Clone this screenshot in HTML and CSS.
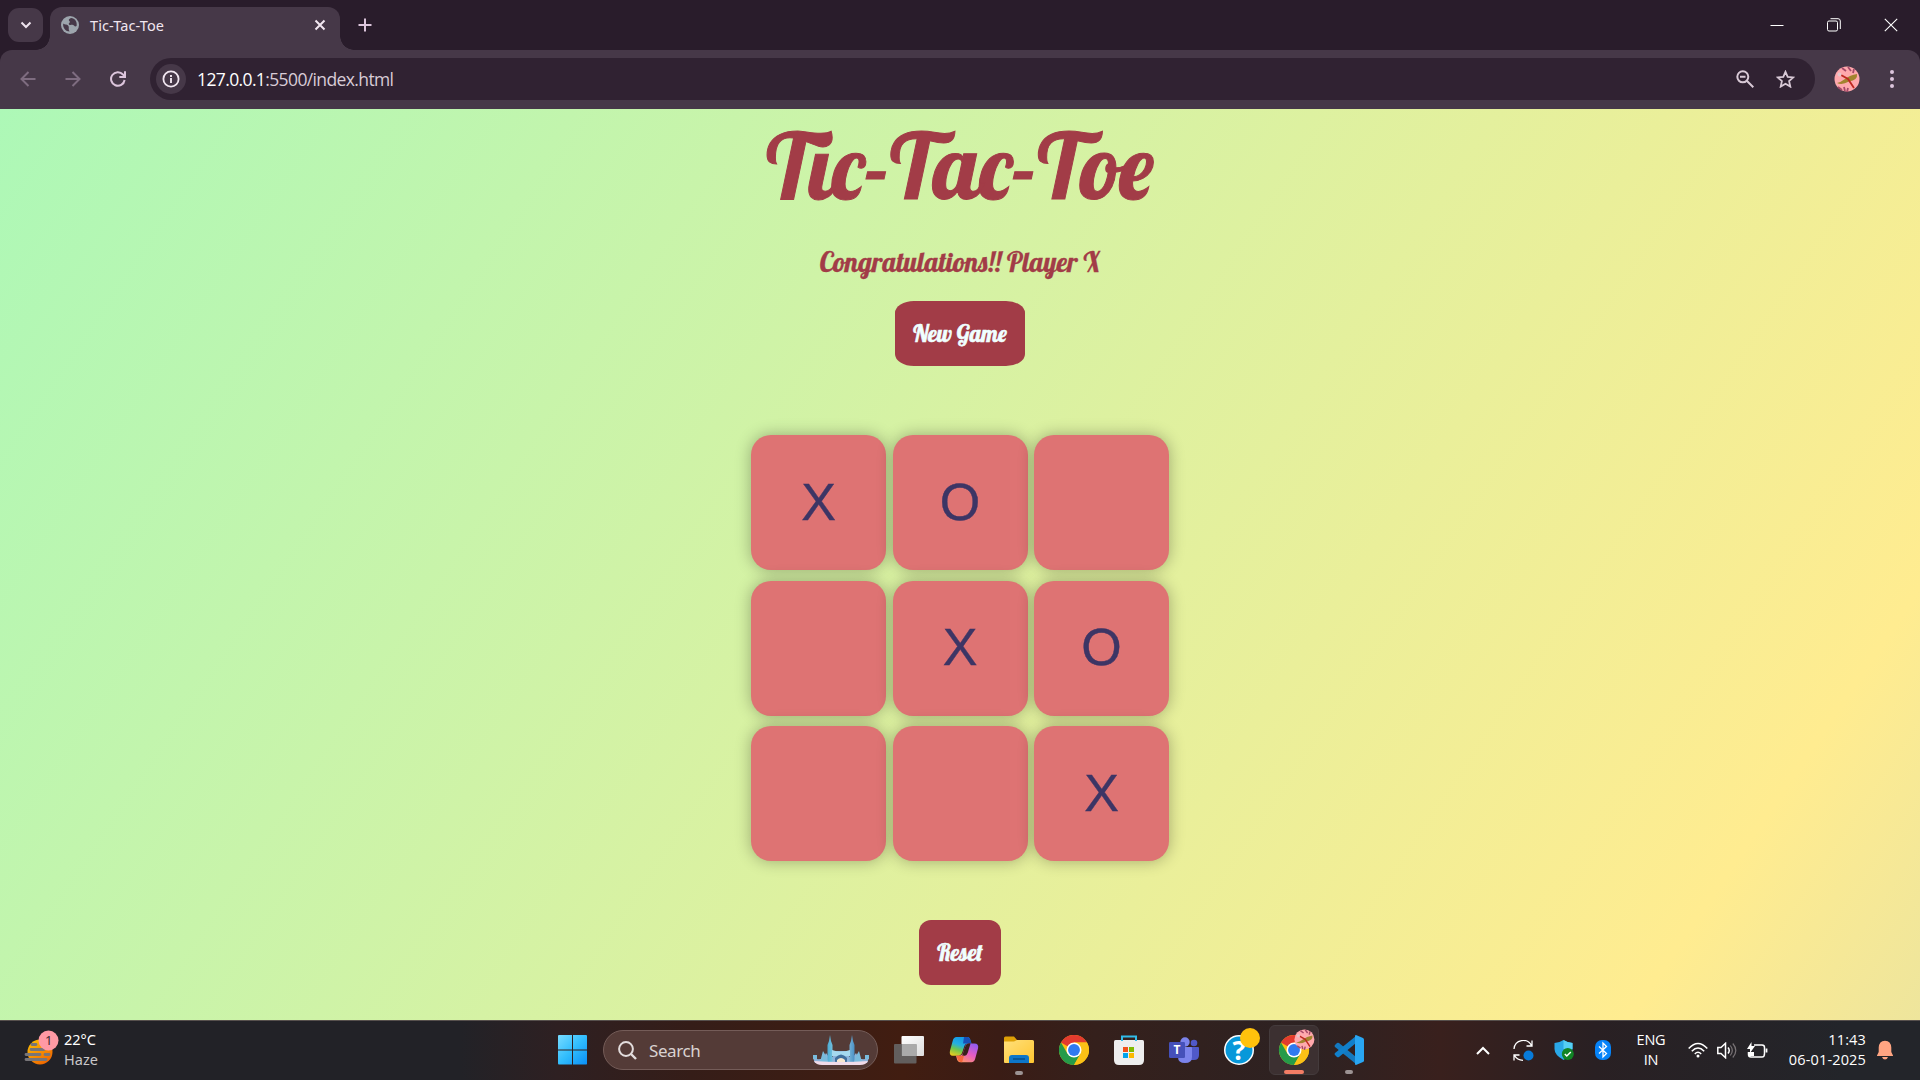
FILE: index.html
```html
<!DOCTYPE html>
<html lang="en">
<head>
<meta charset="utf-8">
<title>Tic-Tac-Toe</title>
<link rel="stylesheet" href="styles.css">
</head>
<body>
<div class="screen">
  <header class="browser">
    <div class="tabstrip">
      <button class="tab-search"><svg width="12" height="8" viewBox="0 0 12 8"><path d="M1.500 1.500 6 6l4.500-4.500" fill="none" stroke="#eee3ee" stroke-width="2"/></svg></button>
      <div class="tab">
        <svg width="18" height="18" viewBox="0 0 18 18"><circle cx="9" cy="9" r="9" fill="#9da5ad"/><path d="M2.200 7.500C4 9 6.500 8 7.500 10c.8 1.500-.5 3 1 5.500C5 15.500 1.500 12 2.200 7.500zM10 2c-2 1-3 2-1.500 3.200C10 6.500 7 7 8 8.500c1.200 1.300 3.500-.5 5 1 .8.900 1.300 1.300 2.600.500C16.500 6 14 2.300 10 2z" fill="#463848"/></svg>
        <span class="tab-title">Tic-Tac-Toe</span>
        <svg width="12" height="12" viewBox="0 0 12 12"><path d="m1.500 1.500 9 9m0-9-9 9" stroke="#f1e6f0" stroke-width="2"/></svg>
      </div>
      <svg class="new-tab" width="14" height="14" viewBox="0 0 14 14"><path d="M7 .5v13M.5 7h13" stroke="#dcc5dc" stroke-width="2"/></svg>
      <div class="window-controls">
        <svg width="14" height="14" viewBox="0 0 14 14"><path d="M.5 7.500h13" stroke="#fff"/></svg>
        <svg width="14" height="14" viewBox="0 0 14 14" fill="none" stroke="#fff"><rect x=".5" y="3" width="10" height="10" rx="1.500"/><path d="M3.500.7H11q2.300 0 2.300 2.300v8"/></svg>
        <svg width="14" height="14" viewBox="0 0 14 14"><path d="m.8.800 12.400 12.400m0-12.400L.8 13.200" stroke="#fff" stroke-width="1.100"/></svg>
      </div>
    </div>
    <div class="toolbar">
      <div class="nav">
        <svg width="16" height="16" viewBox="0 0 16 16" fill="none" stroke="#7e6c80" stroke-width="2"><path d="M15.500 8H2M8.500 1 1.500 8l7 7"/></svg>
        <svg width="16" height="16" viewBox="0 0 16 16" fill="none" stroke="#7e6c80" stroke-width="2"><path d="M.5 8H14M7.500 1l7 7-7 7"/></svg>
        <svg width="16" height="16" viewBox="0 0 16 16" fill="none" stroke="#dcc5dc" stroke-width="2"><path d="M14.600 9A6.800 6.800 0 1 1 13 3.500L14.500 5M15 .3V6H9.300"/></svg>
      </div>
      <div class="omnibox">
        <span class="site-info"><svg width="18" height="18" viewBox="0 0 18 18"><circle cx="9" cy="9" r="7.600" fill="none" stroke="#f1e6f0" stroke-width="1.800"/><path d="M9 8v5M9 5v1.900" stroke="#f1e6f0" stroke-width="1.900"/></svg></span>
        <span class="url"><b>127.0.0.1</b>:5500/index.html</span>
        <svg class="zoom-icon" width="18" height="18" viewBox="0 0 18 18" fill="none" stroke="#d8c9d6" stroke-width="2"><circle cx="6.800" cy="6.800" r="5.500"/><path d="m10.800 10.800 6.500 6.500M4 6.800h5.500"/></svg>
        <svg width="19" height="18" viewBox="0 0 19 18"><path d="m9.500 1.800 2.200 5.100 5.600.5-4.200 3.700 1.200 5.500-4.800-2.900-4.800 2.900 1.200-5.500L1.700 7.400l5.600-.5z" fill="none" stroke="#d8c9d6" stroke-width="1.800"/></svg>
      </div>
      <svg class="avatar" width="26" height="26" viewBox="0 0 26 26"><use href="#dragonfly"/></svg>
      <svg class="menu" width="4" height="18" viewBox="0 0 4 18" fill="#dcc5dc"><circle cx="2" cy="2" r="2"/><circle cx="2" cy="9" r="2"/><circle cx="2" cy="16" r="2"/></svg>
    </div>
  </header>

  <main class="page">
    <h1 class="title">Tic-Tac-Toe</h1>
    <p class="message">Congratulations!! Player X</p>
    <button class="btn new-game">New Game</button>
    <div class="board">
      <button class="box">X</button><button class="box">O</button><button class="box"></button>
      <button class="box"></button><button class="box">X</button><button class="box">O</button>
      <button class="box"></button><button class="box"></button><button class="box">X</button>
    </div>
    <button class="btn reset">Reset</button>
  </main>

  <footer class="taskbar">
    <div class="weather">
      <svg width="36" height="36" viewBox="0 0 36 36"><defs><linearGradient id="sun" x1="0" y1="0" x2=".7" y2="1"><stop stop-color="#ffc400"/><stop offset="1" stop-color="#ef6500"/></linearGradient></defs><circle cx="16" cy="22" r="12.500" fill="url(#sun)"/><path d="M8 14.500h4M7 19.500h13M2 24.500h14m5 0h4M2 29.500h20" stroke="#777578" stroke-width="2.800" stroke-linecap="round"/><circle cx="24.500" cy="10.500" r="10" fill="#ff99a4"/><text x="24.700" y="15" text-anchor="middle" class="badge-number">1</text></svg>
      <div class="weather-text"><span>22°C</span><span class="dim">Haze</span></div>
    </div>
    <div class="apps">
      <svg class="start" width="30" height="30" viewBox="0 0 30 30"><defs><linearGradient id="win" x1="0" y1="0" x2="1" y2="1"><stop stop-color="#78dcff"/><stop offset=".5" stop-color="#31bdfd"/><stop offset="1" stop-color="#0a8ff7"/></linearGradient></defs><path d="M1.500 0H15v14.500H1V1zM16 0h13.500l.5 1v13.500H16zM1 15.500h14v14H1.500l-.5-1zM16 15.500h14V29l-.5.500H16z" fill="url(#win)"/></svg>
      <div class="search">
        <svg width="19" height="19" viewBox="0 0 19 19" fill="none" stroke="#e3dddd" stroke-width="2"><circle cx="8" cy="8" r="6.900"/><path d="m12.500 12.500 5.500 5.500" stroke-width="2.400"/></svg>
        <span>Search</span>
        <svg class="bridge" width="58" height="32" viewBox="0 0 58 32"><defs><linearGradient id="ice" x1="0" x2="1"><stop stop-color="#4babd3"/><stop offset=".5" stop-color="#b3e2f2"/><stop offset="1" stop-color="#4a91c5"/></linearGradient></defs><path d="M1 24q8 3 11-1l2-4 3 4h4V17h16v6h4l3-4 2 4q3 4 11 1l-2 5H3z" fill="#8db4dc"/><path d="M15.500 28V11l1.500-4 1-6 1 6 1.500 4v17zM37.500 28V11l1.500-4 1-6 1 6 1.500 4v17z" fill="url(#ice)"/><path d="M20 16q9 3 18 0v6H20z" fill="#a5d9ef"/><path d="M23 29v-5q6-7 12 0v5z" fill="#406f9d"/><path d="M25 29v-3q4-4 8 0v3z" fill="#f7e7ce"/><path d="M11 17l3 5 2 6H8zM47 17l-3 5-2 6h8z" fill="#79bbdc"/><path d="M1 21h4v4H1zM53 21h4v4h-4z" fill="#79bbdc"/><path d="M2 27q27 2 54 0-2 4-8 4H10q-6 0-8-4z" fill="#f1dbe9"/></svg>
      </div>
      <svg class="task-view" width="30" height="30" viewBox="0 0 30 30"><defs><linearGradient id="pane" x1="0" y1="0" x2="1" y2="1"><stop stop-color="#fff"/><stop offset="1" stop-color="#ddd"/></linearGradient></defs><rect x="7.500" y="1" width="22.500" height="20" rx="1" fill="url(#pane)"/><rect x="0" y="9" width="22.500" height="19.500" rx="1" fill="#666" opacity=".9"/><path d="M8 9h14.500v12H8z" fill="#aaa"/></svg>
      <svg class="app" width="32" height="32" viewBox="0 0 32 32"><defs><linearGradient id="cpa" x1=".4" y1="0" x2="0" y2="1"><stop stop-color="#149be8"/><stop offset=".35" stop-color="#25afe1"/><stop offset=".6" stop-color="#6cc64f"/><stop offset="1" stop-color="#ffcf18"/></linearGradient><linearGradient id="cpb" x1=".8" y1="0" x2=".2" y2="1"><stop stop-color="#8f5cf1"/><stop offset=".5" stop-color="#e65cc2"/><stop offset="1" stop-color="#ff9a62"/></linearGradient></defs><path d="M8 2h12q2 0 3 4l1 3h-4q-3 0-4 4l-2 6q-1 3-4 3H4q-4 0-3-5L4 6q1-4 4-4z" fill="url(#cpa)"/><path d="M16 2h4q2 0 3 4l1 3h-9z" fill="#174fb8"/><path d="M24 9h3q5 0 4 5l-3 11q-1 4-4 4H12q-3 0-4-5l-.5-2H11q3 0 4-3l2-6q1-4 4-4z" fill="url(#cpb)"/><path d="m17 13-3 9h3q2 0 3-3l3-10q-4-1-6 4z" fill="#39201b"/><path d="M8 22h8l-2 7q-4 0-5-4z" fill="#f6673d"/></svg>
      <div class="app running"><svg width="30" height="28" viewBox="0 0 30 28"><defs><linearGradient id="folder" x1="0" y1="0" x2="1" y2="1"><stop stop-color="#ffe07b"/><stop offset="1" stop-color="#ffc530"/></linearGradient></defs><path d="M0 2q0-1.500 1.500-1.500H10l3 3.500h4v7H0z" fill="#dea006"/><path d="M0 5.500h10l3-1.500h15.500Q30 4 30 5.500V26q0 1-1 1H1q-1 0-1-1z" fill="url(#folder)"/><path d="M5 27v-5q0-3 3-3h14q3 0 3 3v5z" fill="#0d76c9"/><path d="M9 23h12" stroke="#064981" stroke-width="1.300"/></svg><i></i></div>
      <svg class="app" width="30" height="30" viewBox="0 0 48 48"><g id="chrome"><circle cx="24" cy="24" r="24" fill="#fbbe0e"/><path d="M24 24 3.200 12A24 24 0 0 1 44.800 12H24z" fill="#e33b2e"/><path d="M3.200 12A24 24 0 0 0 24 48l10.400-18L24 24 13.600 30z" fill="#259b49"/><path d="M24 12h20.800A24 24 0 0 1 24 48l10.400-18z" fill="#fbc116"/><circle cx="24" cy="24" r="12" fill="#fff"/><circle cx="24" cy="24" r="9.500" fill="#2f7af0"/></g></svg>
      <svg class="app" width="30" height="30" viewBox="0 0 30 30"><path d="M1.500 5h27Q30 5 30 6.500V25q0 5-5 5H5q-5 0-5-5V6.500Q0 5 1.500 5z" fill="#eee"/><path d="M8 6V1.500h14V6" fill="none" stroke="#31bce9" stroke-width="2"/><path d="M9 12h5v5H9z" fill="#f1511b"/><path d="M15 12h5v5h-5z" fill="#80bb01"/><path d="M9 18h5v5H9z" fill="#00a3ee"/><path d="M15 18h5v5h-5z" fill="#fbb900"/></svg>
      <svg class="app" width="30" height="30" viewBox="0 0 30 30"><circle cx="25" cy="8" r="3.300" fill="#5059c9"/><circle cx="16" cy="7" r="4.700" fill="#7b83eb"/><path d="M19 12h10q1 0 1 1v7q0 5-5 5h-4z" fill="#5059c9"/><path d="M9 12h13q1 0 1 1v9q0 6-7 6t-7-6z" fill="#7b83eb"/><rect x="0" y="7" width="16" height="16" rx="1.300" fill="#4550b9"/><text x="8" y="19.200" text-anchor="middle" class="teams-letter">T</text></svg>
      <svg class="app help" width="38" height="38" viewBox="0 0 38 38"><circle cx="17" cy="23" r="15" fill="#fff"/><circle cx="17" cy="23" r="13.500" fill="#0798da"/><text x="17" y="33" text-anchor="middle" class="help-mark">?</text><circle cx="28" cy="11" r="10" fill="#ffc20c"/></svg>
      <div class="active-app"><svg width="38" height="38" viewBox="0 0 38 38"><g transform="translate(1 7) scale(.625)"><use href="#chrome"/></g><g transform="translate(16 1) scale(.8)"><g id="dragonfly"><circle cx="13" cy="13" r="12.500" fill="#ffa9ad"/><path d="m8 2 4 3m2-4 3 4m3-2-1 4M4 21l4 3m2-3 1 4m3-3-1 4" stroke="#a64968" stroke-width="1.800"/><path d="M3 17q4-1 8-4 5-4 12-5 1 6-8 7.500-7 4-12 1.500z" fill="#a3832e"/><path d="m7 9 7 4 6 9" fill="none" stroke="#bf2a20" stroke-width="1.800"/><circle cx="5.500" cy="8.500" r="2" fill="#e5c6ca"/></g></g></svg><i></i></div>
      <div class="app running code"><svg width="30" height="30" viewBox="0 0 30 30"><path d="m1 10 2-2q1-.6 2 0l17 14v7L1 12q-1-1 0-2z" fill="#1479bf"/><path d="m1 20 2 2q1 .6 2 0L22 8V1L1 18q-1 1 0 2z" fill="#1180cb"/><path d="m22 0 7 3q1 .5 1 1.500v21q0 1-1 1.500l-7 3q-1 0-1-1V1q0-1 1-1z" fill="#29a6f2"/></svg><i></i></div>
    </div>
    <div class="tray">
      <svg width="14" height="9" viewBox="0 0 14 9"><path d="m1 8 6-6 6 6" fill="none" stroke="#fff" stroke-width="2"/></svg>
      <svg width="21" height="21" viewBox="0 0 21 21" fill="none" stroke="#fff" stroke-width="1.300"><path d="M1 9a9.300 9.300 0 0 1 17.500-3.500M19 .5v5.500h-5.500M1 20.500V15h5.500M1.500 15.500Q4 20 10 20.300"/><circle cx="15.500" cy="15.500" r="5" fill="#087bda" stroke="none"/></svg>
      <svg width="20" height="20" viewBox="0 0 20 20"><path d="M9.500 0Q13 2.500 18.500 3v6q0 6-9 11-9-5-9-11V3Q6 2.500 9.500 0z" fill="#2aa8e8"/><path d="M9.500 0Q13 2.500 18.500 3v6h-9z" fill="#55cff5"/><circle cx="13.800" cy="14" r="6" fill="#118424"/><path d="m10.800 14 2 2 4-4" fill="none" stroke="#fff" stroke-width="1.500"/></svg>
      <svg width="16" height="20" viewBox="0 0 16 20"><rect width="16" height="20" rx="7" fill="#0683f8"/><path d="m4 6.500 7.500 7L8 17V3l3.500 3.500L4 13.500" fill="none" stroke="#fff" stroke-width="1.300"/></svg>
      <div class="lang"><span>ENG</span><span>IN</span></div>
      <svg class="wifi" width="20" height="16" viewBox="0 0 20 16" fill="none" stroke="#fff" stroke-width="1.500"><path d="M.7 6.500q9.300-10 18.600 0M3.800 9.300q6.200-6.500 12.400 0M6.800 12q3.200-3.300 6.400 0"/><circle cx="10" cy="14" r="1.500" fill="#fff" stroke="none"/></svg>
      <svg class="volume" width="20" height="17" viewBox="0 0 20 17" fill="none" stroke="#fff" stroke-width="1.500"><path d="M.8 5.500H4L8.500 1.300v14.400L4 11.500H.8zM11 5.500q2.500 3 0 6"/><path d="M13.300 3.500q4 5 0 10M15.800 1.500q6 7 0 14" stroke="#797376" stroke-width="1.200"/></svg>
      <svg class="battery" width="21" height="16" viewBox="0 0 21 16" fill="none" stroke="#fff" stroke-width="1.500"><path d="M7 3h8q2.500 0 2.500 2.500v6Q17.500 15 15 15H4q-2.500 0-2.500-2.500V10"/><path d="M19.500 6.500v4" stroke-width="1.800"/><path d="M4.500 0v4H8l-5 7V7H0zM2 10h5v4H2z" fill="#fff" stroke="none"/></svg>
      <div class="clock"><span>11:43</span><span>06-01-2025</span></div>
      <svg width="16" height="20" viewBox="0 0 16 20"><path d="M0 15.500 1.700 12V7.500Q2 1 8 .7q6 .3 6.300 6.800V12l1.700 3.500V16H0zM5 17h6q-1 2.500-3 2.500T5 17z" fill="#ffa582"/></svg>
    </div>
  </footer>
</div>
</body>
</html>
```
FILE: styles.css
```css
* { box-sizing: border-box; }
body { margin: 0; font-family: "Noto Sans", sans-serif; }
svg { display: block; flex: none; }
button { border: 0; padding: 0; margin: 0; }
.screen { width: 1920px; height: 1080px; display: flex; flex-direction: column; overflow: hidden; }

.browser { height: 109px; background: #291c2b; flex: none; }
.tabstrip { height: 50px; display: flex; align-items: center; padding-left: 8px; }
.tab-search { width: 35px; height: 34px; border-radius: 11px; background: #463848; display: grid; place-items: center; }
.tab { position: relative; align-self: flex-end; width: 290px; height: 43px; margin-left: 7px; padding: 0 14px 7px 11px; border-radius: 12px 12px 0 0; background: #463848; display: flex; align-items: center; color: #f1e6f0; font-size: 14.500px; }
.tab::before, .tab::after { content: ""; position: absolute; bottom: 0; width: 14px; height: 14px; }
.tab::before { right: 100%; background: radial-gradient(circle at 0 0, transparent 13.500px, #463848 14px); }
.tab::after { left: 100%; background: radial-gradient(circle at 100% 0, transparent 13.500px, #463848 14px); }
.tab-title { flex: 1; margin-left: 11px; letter-spacing: .1px; }
.new-tab { margin-left: 18px; }
.window-controls { margin: -1px 22px 0 auto; display: flex; gap: 43px; }
.toolbar { height: 59px; background: #463848; border-radius: 12px 12px 0 0; display: flex; align-items: center; padding: 0 0 1px 20px; }
.nav { display: flex; gap: 29px; }
.omnibox { width: 1665px; height: 42px; margin-left: 24px; padding: 0 20px 0 6px; border-radius: 21px; background: #302232; display: flex; align-items: center; }
.site-info { width: 30px; height: 30px; border-radius: 50%; background: #463848; display: grid; place-items: center; }
.url { margin-left: 11px; flex: 1; color: #d8ccd7; font-family: "Open Sans", sans-serif; font-size: 17.500px; letter-spacing: -.62px; }
.url b { color: #fff; font-weight: 400; }
.zoom-icon { margin-right: 22px; }
.avatar { margin-left: 19px; }
.menu { margin-left: 30px; }

.page { height: 911px; flex: none; display: flex; flex-direction: column; align-items: center; background: linear-gradient(124deg, #adf8b7 0%, #ffec90 88.500%, #eee59c 100%); }
.title { margin: 0; height: 134px; padding-top: 7px; font: 400 90px/100px "Lobster", "Liberation Serif", serif; -webkit-text-stroke: 1px #a23c47; color: #a23c47; white-space: nowrap; }
.message { margin: 0; height: 58px; font: 400 27px/38px "Lobster", "Liberation Serif", serif; -webkit-text-stroke: .3px #a23c47; color: #a23c47; white-space: nowrap; }
.btn { background: #a23c47; color: #f0ffff; width: 130px; height: 65px; padding-bottom: 1px; flex: none; font: 400 22.500px "Lobster", "Liberation Serif", serif; -webkit-text-stroke: .6px #f0ffff; }
.new-game { border-radius: 19px / 12px; }
.board { margin-top: 69px; display: grid; grid-template-columns: repeat(3, 135px); column-gap: 6.500px; row-gap: 10.500px; }
.box { width: 135px; height: 135px; padding-bottom: 2px; border-radius: 20px; background: #de7373; color: #3c3565; font: 52px "Liberation Sans", sans-serif; -webkit-text-stroke: .4px #3c3565; box-shadow: 0 0 16px rgba(0, 0, 0, .3); }
.reset { margin-top: 59px; width: 82px; border-radius: 12px; }

.taskbar { height: 60px; flex: none; display: flex; align-items: center; border-top: 1px solid #57504d; background: linear-gradient(90deg, #222227 0 24%, #2e2022 29%, #351d18 36%, #411d11 47%, #3a1c15 52%, #35201c 57%, #2d2222 68%, #39201d 75%, #292023 83%, #23252a 96%); color: #fff; font-size: 14.500px; }
.weather { width: 535px; padding-left: 24px; display: flex; align-items: center; }
.weather svg { margin-top: -6px; }
.weather-text { display: flex; flex-direction: column; line-height: 20px; margin: -3px 0 0 4px; }
.dim { color: #c9c7c9; }
.badge-number { font-size: 13px; fill: #382b31; }
.apps { width: 850px; display: flex; align-items: center; padding: 0 0 1px 22px; }
.search { width: 275px; height: 40px; margin: 0 16px; border-radius: 20px; border: 1px solid #745c58; background: #543b37; display: flex; align-items: center; padding: 0 7px 0 14px; font-size: 17px; color: #dad2d1; }
.search span { flex: 1; margin-left: 12px; letter-spacing: -.4px; }
.task-view { margin-right: 25px; }
.app { width: 30px; margin-right: 25px; }
.running, .active-app { position: relative; }
.running i { position: absolute; left: 11px; top: 35px; width: 8px; height: 4px; border-radius: 2px; background: #9c9393; }
.app.help { width: 38px; margin: -8px 9px 0 -2px; overflow: visible; }
.active-app { width: 50px; height: 50px; border-radius: 6px; border: 1px solid #443b3c; background: #3c3031; padding: 2px 0 0 8px; margin-right: 15px; }
.active-app i { position: absolute; left: 14px; top: 44px; width: 20px; height: 4px; border-radius: 2px; background: #f37d65; }
.code { margin-right: 0; }
.tray { flex: 1; display: flex; align-items: center; padding: 0 0 1px 91px; }
.tray > svg:nth-child(2) { margin-left: 23px; }
.tray > svg:nth-child(3) { margin-left: 20px; }
.tray > svg:nth-child(4) { margin-left: 21px; }
.lang, .clock { display: flex; flex-direction: column; line-height: 20px; font-family: "Open Sans", sans-serif; font-size: 14.500px; letter-spacing: -.2px; }
.lang { width: 36px; margin-left: 22px; align-items: center; }
.wifi { margin-left: 19px; }
.volume { margin-left: 9px; }
.battery { margin-left: 10px; }
.clock { width: 81px; margin: -1px 11px 0 17px; align-items: flex-end; white-space: nowrap; letter-spacing: .15px; }
.teams-letter { font: 700 12px "Open Sans", sans-serif; fill: #fff; }
.help-mark { font: 700 27px "Open Sans", sans-serif; fill: #fff; }
```
